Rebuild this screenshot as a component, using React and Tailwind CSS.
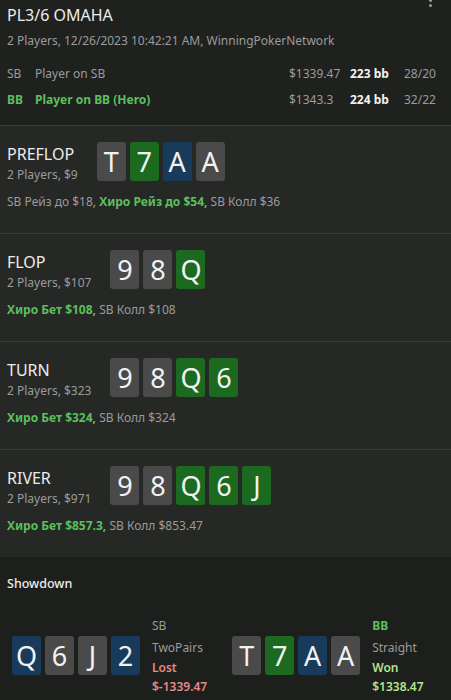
import React from "react";

const CARD_COLORS = {
  g: "bg-[#4a4a4a]",
  n: "bg-[#1b6a1f]",
  b: "bg-[#183b5b]",
};

function Card({ rank, color }) {
  return (
    <div
      className={`w-[29px] h-[39px] rounded-[3px] flex items-center justify-center text-[27px] leading-none text-[#f2f2f2] ${CARD_COLORS[color]}`}
    >
      {rank}
    </div>
  );
}

function Cards({ cards }) {
  return (
    <div className="flex gap-[4px]">
      {cards.map((c, i) => (
        <Card key={i} rank={c[0]} color={c[1]} />
      ))}
    </div>
  );
}

const streets = [
  {
    name: "PREFLOP",
    info: "2 Players, $9",
    cards: [["T", "g"], ["7", "n"], ["A", "b"], ["A", "g"]],
    actions: [
      { text: "SB Рейз до $18, ", hero: false },
      { text: "Хиро Рейз до $54,", hero: true },
      { text: " SB Колл $36", hero: false },
    ],
  },
  {
    name: "FLOP",
    info: "2 Players, $107",
    cards: [["9", "g"], ["8", "g"], ["Q", "n"]],
    actions: [
      { text: "Хиро Бет $108,", hero: true },
      { text: " SB Колл $108", hero: false },
    ],
  },
  {
    name: "TURN",
    info: "2 Players, $323",
    cards: [["9", "g"], ["8", "g"], ["Q", "n"], ["6", "n"]],
    actions: [
      { text: "Хиро Бет $324,", hero: true },
      { text: " SB Колл $324", hero: false },
    ],
  },
  {
    name: "RIVER",
    info: "2 Players, $971",
    cards: [["9", "g"], ["8", "g"], ["Q", "n"], ["6", "n"], ["J", "n"]],
    actions: [
      { text: "Хиро Бет $857.3,", hero: true },
      { text: " SB Колл $853.47", hero: false },
    ],
  },
];

function Street({ s }) {
  return (
    <div className="border-t border-[#3a3b3a] bg-[#262826] px-[7px] pt-[16px] h-[108px]">
      <div className="flex items-start gap-[19px]">
        <div className="flex flex-col pt-[1px]">
          <div className="text-[16px] leading-[22px] text-[#ececec]">{s.name}</div>
          <div className="mt-[2px] text-[12px] leading-[16px] text-[#9b9b9b]">{s.info}</div>
        </div>
        <Cards cards={s.cards} />
      </div>
      <div className="mt-[11px] text-[12px] leading-[16px] text-[#9b9b9b]">
        {s.actions.map((a, i) => (
          <span key={i} className={a.hero ? "font-bold text-[#5cbf5c]" : ""}>
            {a.text}
          </span>
        ))}
      </div>
    </div>
  );
}

function Hand({ cards, pos, posHero, combo, result, won, amount }) {
  const resultColor = won ? "text-[#b4e48c]" : "text-[#e68a86]";
  return (
    <div className="flex items-center gap-[12px]">
      <Cards cards={cards} />
      <div className="flex flex-col text-[12px]">
        <span className={`leading-[23px] ${posHero ? "font-bold text-[#5cbf5c]" : "text-[#9b9b9b]"}`}>
          {pos}
        </span>
        <span className="leading-[21px] text-[#9b9b9b]">{combo}</span>
        <span className={`leading-[20px] font-semibold ${resultColor}`}>{result}</span>
        <span className={`leading-[18px] font-semibold ${resultColor}`}>{amount}</span>
      </div>
    </div>
  );
}

export default function App() {
  return (
    <div
      className="w-[451px] h-[700px] overflow-hidden bg-[#1e201e] relative"
      style={{ fontFamily: '"Noto Sans", "Open Sans", sans-serif' }}
    >
      {/* kebab menu, cut off at top */}
      <div className="absolute top-[-6px] left-[429px] flex flex-col gap-[2px]">
        <span className="w-[3px] h-[3px] bg-[#9a9a9a] rounded-full" />
        <span className="w-[3px] h-[3px] bg-[#9a9a9a] rounded-full" />
        <span className="w-[3px] h-[3px] bg-[#9a9a9a] rounded-full" />
      </div>

      {/* Header */}
      <div className="px-[7px] pt-[3px] h-[125px] bg-[#1f211f]">
        <div className="text-[16px] leading-[24px] text-[#ececec]">PL3/6 OMAHA</div>
        <div className="mt-[6px] text-[12px] leading-[16px] text-[#9b9b9b]">
          2 Players, 12/26/2023 10:42:21 AM, WinningPokerNetwork
        </div>
        <div className="mt-[17px] flex flex-col gap-[10px] text-[12px] leading-[16px]">
          <div className="flex items-center text-[#9b9b9b]">
            <span className="w-[28px]">SB</span>
            <span className="flex-1">Player on SB</span>
            <span className="w-[61px]">$1339.47</span>
            <span className="w-[54px] font-bold text-[#f2f2f2]">223 bb</span>
            <span className="w-[40px]">28/20</span>
          </div>
          <div className="flex items-center text-[#9b9b9b]">
            <span className="w-[28px] font-bold text-[#5cbf5c]">BB</span>
            <span className="flex-1 font-bold text-[#5cbf5c]">Player on BB (Hero)</span>
            <span className="w-[61px]">$1343.3</span>
            <span className="w-[54px] font-bold text-[#f2f2f2]">224 bb</span>
            <span className="w-[40px]">32/22</span>
          </div>
        </div>
      </div>

      {streets.map((s) => (
        <Street key={s.name} s={s} />
      ))}

      {/* Showdown */}
      <div className="bg-[#1d1f1d] px-[7px] pt-[19px]">
        <div className="text-[12.5px] leading-[16px] font-medium text-[#ececec]">Showdown</div>
        <div className="mt-[22px] pl-[5px] flex items-center gap-[25px]">
          <Hand
            cards={[["Q", "b"], ["6", "g"], ["J", "g"], ["2", "b"]]}
            pos="SB"
            combo="TwoPairs"
            result="Lost"
            won={false}
            amount="$-1339.47"
          />
          <Hand
            cards={[["T", "g"], ["7", "n"], ["A", "b"], ["A", "g"]]}
            pos="BB"
            posHero
            combo="Straight"
            result="Won"
            won
            amount="$1338.47"
          />
        </div>
      </div>
    </div>
  );
}
